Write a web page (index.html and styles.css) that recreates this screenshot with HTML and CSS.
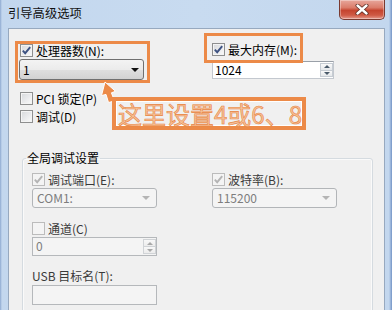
FILE: index.html
```html
<!DOCTYPE html>
<html>
<head>
<meta charset="utf-8">
<link rel="stylesheet" href="styles.css">
</head>
<body>
<div class="window">
  <div class="titlebar">
    <span class="title">引导高级选项</span>
    <div class="close">
      <svg width="14" height="11" viewBox="0 0 14 11"><path d="M2.5 1.5 L11.5 9.5 M11.5 1.5 L2.5 9.5" stroke="#5a2a22" stroke-width="4" stroke-linecap="round"/><path d="M2.5 1.5 L11.5 9.5 M11.5 1.5 L2.5 9.5" stroke="#fff" stroke-width="2.4" stroke-linecap="round"/></svg>
    </div>
  </div>
  <div class="client">
    <div class="top">
      <div class="col">
        <div class="chk"><span class="box"><svg width="11" height="11" viewBox="0 0 11 11"><path d="M1.8 5.6 L4.2 8.2 L9.2 2.2" fill="none" stroke="#3d5282" stroke-width="1.9"/></svg></span>处理器数(N):</div>
        <div class="combo"><span>1</span><span class="arrow"></span></div>
      </div>
      <div class="col colr">
        <div class="chk"><span class="box"><svg width="11" height="11" viewBox="0 0 11 11"><path d="M1.8 5.6 L4.2 8.2 L9.2 2.2" fill="none" stroke="#3d5282" stroke-width="1.9"/></svg></span>最大内存(M):</div>
        <div class="spin"><span class="val">1024</span><span class="spinbtns"><span class="sb"><i class="up"></i></span><span class="sb"><i class="dn"></i></span></span></div>
      </div>
    </div>
    <div class="chk row-pci"><span class="box"></span>PCI 锁定(P)</div>
    <div class="chk row-dbg"><span class="box"></span>调试(D)</div>
    <fieldset class="group">
      <legend>全局调试设置</legend>
      <div class="ggrid">
        <div class="col">
          <div class="chk dis"><span class="box"><svg width="11" height="11" viewBox="0 0 11 11"><path d="M1.8 5.6 L4.2 8.2 L9.2 2.2" fill="none" stroke="#b4b4b4" stroke-width="1.9"/></svg></span>调试端口(E):</div>
          <div class="combo dis"><span>COM1:</span><span class="arrow"></span></div>
          <div class="chk dis row-ch"><span class="box"></span>通道(C)</div>
          <div class="spin dis"><span class="val">0</span><span class="spinbtns"><span class="sb"><i class="up"></i></span><span class="sb"><i class="dn"></i></span></span></div>
          <div class="lbl dis">USB 目标名(T):</div>
          <div class="tb dis"></div>
        </div>
        <div class="col">
          <div class="chk dis"><span class="box"><svg width="11" height="11" viewBox="0 0 11 11"><path d="M1.8 5.6 L4.2 8.2 L9.2 2.2" fill="none" stroke="#b4b4b4" stroke-width="1.9"/></svg></span>波特率(B):</div>
          <div class="combo dis"><span>115200</span><span class="arrow"></span></div>
        </div>
      </div>
    </fieldset>
  </div>

  <div class="hl hl-cpu"></div>
  <div class="hl hl-mem"></div>
  <svg class="pointer" width="30" height="30" viewBox="0 0 30 30"><polygon points="10,6 20.5,15.3 16.4,16.8 19.5,25 13.5,26.5 11,18.4 6.5,19.6" fill="#ec8a48" stroke="#fff" stroke-width="1"/></svg>
  <div class="callout">这里设置4或6、8</div>
</div>
</body>
</html>
```
FILE: styles.css
```css
* { box-sizing: border-box; }
html, body { margin: 0; padding: 0; }
body {
  width: 392px;
  height: 310px;
  overflow: hidden;
  font-family: "Noto Sans CJK SC", "Noto Sans", sans-serif;
  font-size: 12px;
  color: #000;
  background: #c4d8ee;
}
.window {
  position: relative;
  width: 392px;
  height: 310px;
  overflow: hidden;
  display: flex;
  flex-direction: column;
  background: linear-gradient(90deg, #8ea9d0 0, #c3d7ee 2px, #c8dbf0 50%, #c3d7ee 389px, #7394c6 392px);
}
.titlebar {
  height: 28px;
  flex: none;
  display: flex;
  align-items: flex-start;
  padding-left: 8px;
}
.title {
  margin-top: 6px;
  line-height: 15px;
  font-size: 12.3px;
  color: #111;
}
.close {
  margin-left: auto;
  margin-right: 7px;
  width: 46px;
  height: 20px;
  border: 1px solid #7a3a30;
  border-top: none;
  border-radius: 0 0 5px 5px;
  background: linear-gradient(#e7a79c 0%, #db7c6a 40%, #c5442f 55%, #cf5a45 80%, #e59a8d 100%);
  box-shadow: inset 0 0 0 1px rgba(255,255,255,0.35);
  display: flex;
  align-items: center;
  justify-content: center;
}
.client {
  flex: 1;
  margin: 0 7px 0 8px;
  background: #f0f0f0;
  border: 1px solid #97a9bf;
  border-bottom: none;
  padding-top: 15px;
}
.top {
  display: grid;
  grid-template-columns: 192px 170px;
  padding-left: 11px;
}
.col { display: flex; flex-direction: column; align-items: flex-start; }
.colr { margin-top: -1px; }
.chk {
  display: flex;
  align-items: center;
  height: 13px;
  line-height: 13px;
  gap: 3px;
  white-space: nowrap;
}
.box {
  width: 13px;
  height: 13px;
  flex: none;
  border: 1px solid #8e8f8f;
  background: linear-gradient(135deg, #d6d8db, #fbfbfb);
  box-shadow: inset 0 0 0 1px #f4f4f4;
  display: flex;
  align-items: center;
  justify-content: center;
}
.chk.dis { color: #3a3a3a; }
.chk.dis .box { border-color: #bcbcbc; background: #f4f4f4; box-shadow: none; }
.combo {
  width: 125px;
  height: 21px;
  margin-top: 2px;
  margin-left: -1px;
  border: 1px solid #707070;
  border-radius: 3px;
  background: linear-gradient(#f3f3f3 0, #ebebeb 50%, #dfdfdf 51%, #d2d2d2 100%);
  display: flex;
  align-items: center;
  justify-content: space-between;
  padding: 0 4px 0 3px;
  line-height: 14px;
}
.arrow {
  width: 0;
  height: 0;
  border-left: 4px solid transparent;
  border-right: 4px solid transparent;
  border-top: 4px solid #111;
}
.combo.dis {
  height: 20px;
  margin-left: 0;
  border-color: #b2b5b8;
  background: #f4f4f4;
  color: #7d7d7d;
  padding-left: 4px;
  padding-right: 6px;
}
.combo.dis .arrow { border-top-color: #b4b4b4; }
.spin {
  width: 122px;
  height: 18px;
  margin-top: 5px;
  border: 1px solid #c3c8cf;
  border-top-color: #9aa0a8;
  background: #fff;
  display: flex;
  align-items: stretch;
  justify-content: space-between;
  padding-left: 2px;
}
.val { line-height: 16px; }
.spinbtns { display: flex; flex-direction: column; width: 13px; margin: 1px 0; }
.sb {
  flex: 1;
  display: flex;
  align-items: center;
  justify-content: center;
  border: 1px solid #c6ccd3;
  background: linear-gradient(#fafafa, #e4e7ea);
}
.sb + .sb { border-top: none; }
.sb i { width: 0; height: 0; border-left: 3px solid transparent; border-right: 3px solid transparent; }
.sb i.up { border-bottom: 3px solid #4a5a6a; }
.sb i.dn { border-top: 3px solid #4a5a6a; }
.row-pci { margin: 12px 0 0 11px; }
.row-dbg { margin: 5px 0 0 11px; }
.group {
  margin: 28px 0 0 13px;
  width: 351px;
  min-width: 0;
  height: 200px;
  padding: 8px 0 0 9px;
  border: 1px solid #d5dbe0;
  border-radius: 3px;
  box-shadow: inset 0 0 0 1px #fafafa;
}
.group legend {
  margin-left: -6px;
  padding: 0 1px;
  line-height: 14px;
  height: 14px;
}
.ggrid { display: grid; grid-template-columns: 180px 160px; }
.ggrid .combo.dis { margin-top: 2px; }
.row-ch { margin-top: 14px; }
.spin.dis {
  width: 125px;
  height: 19px;
  margin-top: 2px;
  border: 1px solid #b5b8bb;
  background: #f4f4f4;
  color: #7d7d7d;
  padding-left: 3px;
}
.spin.dis .sb { border-color: #d0d3d6; background: linear-gradient(#f8f8f8, #ececec); }
.spin.dis .sb i.up { border-bottom-color: #a8a8a8; }
.spin.dis .sb i.dn { border-top-color: #a8a8a8; }
.lbl { margin-top: 13px; height: 13px; line-height: 13px; color: #3a3a3a; }
.tb {
  width: 125px;
  height: 20px;
  margin-top: 3px;
  border: 1px solid #b5b8bb;
  background: #f4f4f4;
}
.hl {
  position: absolute;
  border: 3px solid #ec8a48;
}
.hl-cpu { left: 15px; top: 41px; width: 135px; height: 42px; }
.hl-mem { left: 204px; top: 33px; width: 99px; height: 30px; }
.pointer { position: absolute; left: 95px; top: 76px; }
.callout {
  position: absolute;
  left: 112px;
  top: 97px;
  width: 194px;
  height: 33px;
  border: 4px solid #ec8a48;
  box-shadow: inset 0 0 0 1px #fff;
  padding-left: 2px;
  display: flex;
  align-items: center;
  font-size: 24px;
  line-height: 26px;
  color: #f6c29a;
  white-space: nowrap;
  -webkit-text-stroke: 0.6px #e8843f;
}
```
